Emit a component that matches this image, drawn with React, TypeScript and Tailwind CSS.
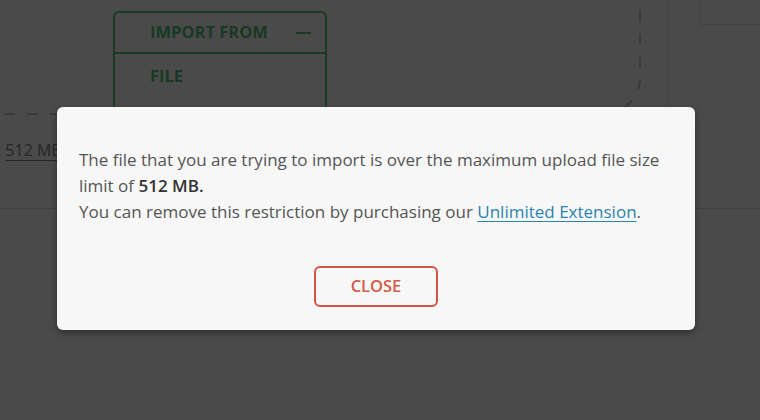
export default function App() {
  return (
    <div className="relative h-[420px] w-[760px] overflow-hidden bg-[#4a4a4a] font-['Open_Sans',sans-serif]">
      {/* Page behind the dimmed overlay */}
      <div className="flex h-[209px] border-b border-[#414141]">
        <div className="relative w-[669px] border-r border-[#424242]">
          {/* Drop zone */}
          <div className="relative -ml-[40px] -mt-[30px] h-[145px] w-[681px]">
            <svg className="absolute inset-0 h-full w-full" viewBox="0 0 681 145" fill="none">
              <rect x="1" y="1" width="679" height="143" rx="36" stroke="#3b3b3b" strokeWidth="2" strokeDasharray="11 12" />
            </svg>
          </div>
          <p className="-ml-[3px] mt-[24px] text-[16px] leading-[22px] text-[#262626]">
            : <span className="underline underline-offset-[4px]">512 MB</span>
          </p>

          {/* Import menu */}
          <div className="absolute left-[113px] top-[11px] h-[200px] w-[214px] rounded-[6px] border-2 border-[#183a22]">
            <div className="flex h-[41px] items-center border-b-2 border-[#183a22] pl-[35px] pr-[14px]">
              <span className="text-[16.5px] font-bold text-[#183a22]">IMPORT FROM</span>
              <span className="ml-auto h-[2px] w-[15px] bg-[#183a22]" />
            </div>
            <p className="pl-[35px] pt-[11px] text-[16.5px] font-bold leading-[22px] text-[#183a22]">FILE</p>
          </div>
        </div>
        <div className="flex-1">
          <div className="ml-[31px] h-[25px] border-b border-l border-[#424242]" />
        </div>
      </div>

      {/* Modal */}
      <div className="absolute inset-0">
        <div className="ml-[57px] mt-[107px] w-[638px] rounded-[6px] bg-[#f7f7f7] px-[22px] pb-[23px] pt-[40px] shadow-[0_3px_6px_rgba(0,0,0,0.35)]">
          <p className="whitespace-nowrap text-[17px] leading-[26px] text-[#555555]">
            The file that you are trying to import is over the maximum upload file size
            <br />
            limit of <span className="font-semibold text-[#333333]">512 MB.</span>
            <br />
            You can remove this restriction by purchasing our{' '}
            <a href="#" className="text-[#2a84ae] underline underline-offset-[3px]">
              Unlimited Extension
            </a>
            .
          </p>
          <div className="mt-[41px] flex justify-center">
            <button className="h-[41px] w-[124px] rounded-[6px] border-2 border-[#d2533f] text-[16.5px] font-semibold text-[#d35a46]">
              CLOSE
            </button>
          </div>
        </div>
      </div>
    </div>
  )
}
